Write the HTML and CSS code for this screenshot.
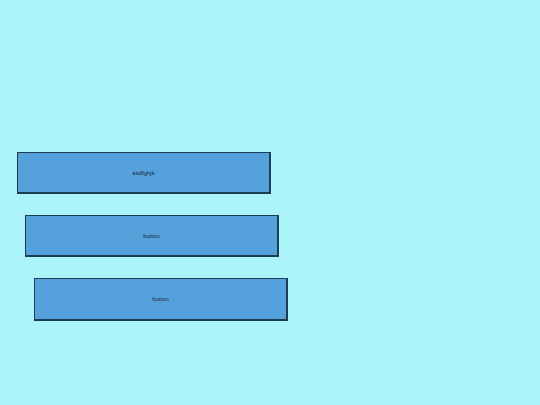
FILE: index.html
```html
<!DOCTYPE html>
<html>
<head>
    <title>Buttons</title>
    <link rel="stylesheet" href="styles.css">
</head>
<body>
    <div class="stack">
        <div class="btn btn-first">asdfghjk</div>
        <div class="btn btn-second">button</div>
        <div class="btn btn-third">button</div>
    </div>
</body>
</html>
```

FILE: styles.css
```css
:root {
    --bg-color: #abf4f9;
    --btn-color: #55a1db;
    --btn-border: #1e3d52;
    --text-color: #1a2a44;
}

* {
    margin: 0;
    padding: 0;
    box-sizing: border-box;
}

html, body {
    height: 100%;
}

body {
    background-color: var(--bg-color);
    font-family: 'Liberation Sans', Arial, sans-serif;
}

.stack {
    display: flex;
    flex-direction: column;
    align-items: flex-start;
    gap: 21px;
    padding-top: 152px;
    padding-left: 17px;
}

.btn {
    width: 254px;
    height: 42px;
    display: flex;
    align-items: center;
    justify-content: center;
    background-color: var(--btn-color);
    border: 1px solid var(--btn-border);
    border-right-width: 2px;
    border-bottom-width: 2px;
    color: var(--text-color);
    font-size: 6px;
}

.btn-second {
    margin-left: 8px;
}

.btn-third {
    margin-left: 17px;
    height: 43px;
}
```
